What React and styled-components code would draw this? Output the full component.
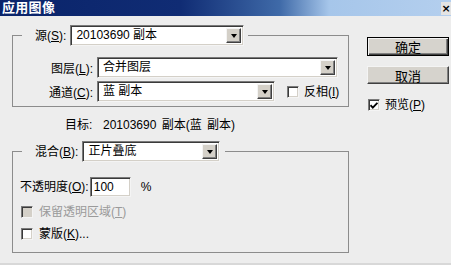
import React from 'react';
import styled, { createGlobalStyle } from 'styled-components';

const GlobalStyle = createGlobalStyle`
  html, body {
    margin: 0;
    padding: 0;
    background: #ededed;
  }
  body {
    font-family: "Liberation Sans", "Noto Sans CJK SC", sans-serif;
    font-size: 12px;
    color: #000;
  }
`;

// Window frame
const Window = styled.div`
  width: 451px;
  height: 265px;
  box-sizing: border-box;
  background: #ededed;
  border-bottom: 2px solid #d8d8d8;
  display: flex;
  flex-direction: column;
  overflow: hidden;
`;

const TitleBar = styled.div`
  height: 16px;
  flex: none;
  display: flex;
  align-items: center;
  justify-content: space-between;
  background: linear-gradient(to right, #0a246a 0%, #102c74 40%, #3f6aa8 62%, #a6c6ea 73%, #b4cfee 100%);
`;

const Title = styled.span`
  color: #fff;
  font-weight: bold;
  font-size: 13px;
  line-height: 16px;
  padding-left: 2px;
  letter-spacing: 0.3px;
`;

const CloseButton = styled.span`
  width: 10px;
  height: 13px;
  background: #e4e4e4;
  font-family: "DejaVu Sans", sans-serif;
  font-size: 11px;
  font-weight: bold;
  line-height: 13px;
  text-align: center;
  color: #000;
`;

const Body = styled.div`
  display: flex;
  padding: 9px 0 0 12px;
`;

const LeftColumn = styled.div`
  width: 337px;
  display: flex;
  flex-direction: column;
`;

const RightColumn = styled.div`
  width: 82px;
  margin-left: 18px;
  padding-top: 12px;
  display: flex;
  flex-direction: column;
`;

// Group boxes
const Group = styled.fieldset`
  margin: 0;
  padding: 0 0 ${p => p.$padBottom}px 0;
  border: 1px solid #8c8c8c;
  min-width: 0;
`;

const Legend = styled.legend`
  margin-left: 9px;
  padding: 0 ${p => p.$padRight}px 0 13px;
  display: flex;
  align-items: center;
  gap: 4px;
`;

const Label = styled.span`
  white-space: nowrap;
  line-height: 14px;
  color: ${p => (p.$disabled ? '#9a9a9a' : '#000')};
`;

const Key = styled.span`
  text-decoration: underline;
  text-underline-offset: 1px;
`;

// Select box
const Select = styled.div`
  width: ${p => p.$width}px;
  height: 21px;
  box-sizing: border-box;
  background: #fff;
  border: 1px solid;
  border-color: #7a7a7a #f4f4f4 #f4f4f4 #7a7a7a;
  box-shadow: inset 1px 1px 0 #3a3a3a, inset -1px -1px 0 #d4d0c8;
  display: flex;
  align-items: center;
  padding: 2px 2px 2px 5px;
`;

const SelectValue = styled.span`
  flex: 1;
  white-space: nowrap;
  line-height: 15px;
`;

const DropButton = styled.span`
  width: 15px;
  height: 15px;
  box-sizing: border-box;
  background: #d4d0c8;
  border: 1px solid;
  border-color: #f4f4f4 #404040 #404040 #f4f4f4;
  box-shadow: inset -1px -1px 0 #808080;
  display: flex;
  align-items: center;
  justify-content: center;
`;

const Arrow = styled.span`
  width: 0;
  height: 0;
  border-left: 3.5px solid transparent;
  border-right: 3.5px solid transparent;
  border-top: 4px solid #000;
  margin-top: 1px;
`;

const FieldRows = styled.div`
  display: flex;
  flex-direction: column;
  gap: 3px;
  margin-top: 11px;
`;

const FieldRow = styled.div`
  display: flex;
  align-items: center;
`;

const RowLabel = styled.span`
  width: 80px;
  text-align: right;
  margin-right: 4px;
  white-space: nowrap;
`;

// Checkbox
const CheckRow = styled.div`
  display: flex;
  align-items: center;
  gap: ${p => p.$gap || 6}px;
  margin-left: ${p => p.$left || 0}px;
  height: ${p => p.$height || 14}px;
`;

const Box = styled.span`
  width: 12px;
  height: 12px;
  box-sizing: border-box;
  flex: none;
  background: ${p => (p.$disabled ? '#d4d0c8' : '#fff')};
  border: 1px solid;
  border-color: #7a7a7a #f4f4f4 #f4f4f4 #7a7a7a;
  box-shadow: inset 1px 1px 0 #3a3a3a, inset -1px -1px 0 #d4d0c8;
  display: flex;
  align-items: center;
  justify-content: center;
`;

const TargetLine = styled.div`
  margin: 11px 0 0 53px;
  line-height: 14px;
  white-space: nowrap;
  word-spacing: 2px;
`;

const GroupGap = styled.div`
  height: 9px;
`;

const OpacityRow = styled.div`
  display: flex;
  align-items: center;
  margin: 15px 0 8px 7px;
`;

const NumberInput = styled.div`
  width: 41px;
  height: 20px;
  box-sizing: border-box;
  margin-left: 1px;
  background: #fff;
  border: 1px solid;
  border-color: #7a7a7a #f4f4f4 #f4f4f4 #7a7a7a;
  box-shadow: inset 1px 1px 0 #3a3a3a, inset -1px -1px 0 #d4d0c8;
  padding: 2px 3px;
  line-height: 15px;
`;

const Percent = styled.span`
  margin-left: 10px;
`;

const OptionList = styled.div`
  display: flex;
  flex-direction: column;
  gap: 8px;
`;

// Buttons
const Button = styled.div`
  height: ${p => (p.$default ? 19 : 18)}px;
  box-sizing: border-box;
  background: #d6d3cd;
  border: 1px solid;
  border-color: ${p => (p.$default ? '#000' : '#f4f4f4 #404040 #404040 #f4f4f4')};
  box-shadow: ${p =>
    p.$default
      ? 'inset 1px 1px 0 #f4f4f4, inset -1px -1px 0 #404040, inset -2px -2px 0 #808080'
      : 'inset -1px -1px 0 #808080'};
  display: flex;
  align-items: center;
  justify-content: center;
  font-size: 13px;
  margin-bottom: ${p => p.$after}px;
`;

const CheckMark = () => (
  <svg width="8" height="7" viewBox="0 0 8 7">
    <path d="M0.5 3.2 L2.8 5.6 L7.4 0.8" fill="none" stroke="#000" strokeWidth="1.8" />
  </svg>
);

const Dropdown = ({ width, value }) => (
  <Select $width={width}>
    <SelectValue>{value}</SelectValue>
    <DropButton>
      <Arrow />
    </DropButton>
  </Select>
);

const Mnemonic = ({ text, k, tail = '' }) => (
  <>
    {text}(<Key>{k}</Key>){tail}
  </>
);

export default function App() {
  return (
    <>
      <GlobalStyle />
      <Window>
        <TitleBar>
          <Title>应用图像</Title>
          <CloseButton>×</CloseButton>
        </TitleBar>
        <Body>
          <LeftColumn>
            <Group $padBottom={4}>
              <Legend $padRight={4}>
                <Label><Mnemonic text="源" k="S" tail=":" /></Label>
                <Dropdown width={174} value="20103690 副本" />
              </Legend>
              <FieldRows>
                <FieldRow>
                  <RowLabel><Mnemonic text="图层" k="L" tail=":" /></RowLabel>
                  <Dropdown width={241} value="合并图层" />
                </FieldRow>
                <FieldRow>
                  <RowLabel><Mnemonic text="通道" k="C" tail=":" /></RowLabel>
                  <Dropdown width={178} value="蓝 副本" />
                  <CheckRow $left={12} $gap={5}>
                    <Box />
                    <Label><Mnemonic text="反相" k="I" /></Label>
                  </CheckRow>
                </FieldRow>
              </FieldRows>
            </Group>

            <TargetLine>目标:&nbsp; 20103690 副本(蓝 副本)</TargetLine>
            <GroupGap />

            <Group $padBottom={11}>
              <Legend $padRight={5}>
                <Label><Mnemonic text="混合" k="B" tail=":" /></Label>
                <Dropdown width={138} value="正片叠底" />
              </Legend>
              <OpacityRow>
                <Label><Mnemonic text="不透明度" k="O" tail=":" /></Label>
                <NumberInput>100</NumberInput>
                <Percent>%</Percent>
              </OpacityRow>
              <OptionList>
                <CheckRow $left={8}>
                  <Box $disabled />
                  <Label $disabled><Mnemonic text="保留透明区域" k="T" /></Label>
                </CheckRow>
                <CheckRow $left={8}>
                  <Box />
                  <Label><Mnemonic text="蒙版" k="K" tail="..." /></Label>
                </CheckRow>
              </OptionList>
            </Group>
          </LeftColumn>

          <RightColumn>
            <Button $default $after={10}>确定</Button>
            <Button $after={14}>取消</Button>
            <CheckRow $gap={5} $left={1}>
              <Box>
                <CheckMark />
              </Box>
              <Label><Mnemonic text="预览" k="P" /></Label>
            </CheckRow>
          </RightColumn>
        </Body>
      </Window>
    </>
  );
}
